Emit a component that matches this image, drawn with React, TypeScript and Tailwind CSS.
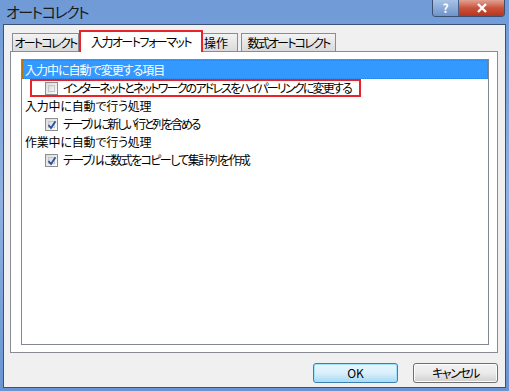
import React from "react";

const jp = "font-['Noto_Sans_CJK_JP','Noto_Sans',sans-serif] [font-feature-settings:'palt'] whitespace-nowrap";

function Check({ checked }: { checked?: boolean }) {
  return (
    <div className="relative w-[13px] h-[13px] border border-[#8e8f8f] bg-gradient-to-br from-[#dcdcdc] to-[#fbfbfb] shrink-0">
      <div className="absolute inset-[2px] border border-[#c6c6c6] bg-gradient-to-br from-[#d8d8d8] to-[#f7f7f7]" />
      {checked && (
        <svg className="absolute left-[1px] top-[1px]" width="10" height="10" viewBox="0 0 10 10">
          <path d="M1.5 5 L4 8 L8.5 1.2" fill="none" stroke="#2a4ea8" strokeWidth="1.8" />
        </svg>
      )}
    </div>
  );
}

export default function App() {
  return (
    <div className={`w-[509px] h-[391px] bg-gradient-to-b from-[#6f9ad6] via-[#8fb2e2] to-[#6a95d2] flex flex-col ${jp} text-[12px] text-black leading-none`}>
      {/* title bar */}
      <div className="h-[24px] flex items-start relative">
        <div className="pl-[6px] pt-[4px] text-[15px] text-[#1a1a1a] tracking-[-1.5px]">オートコレクト</div>
        <div className="ml-auto mr-[4px] flex h-[17px] rounded-b-[4px] border border-t-0 border-[#3a4f73] overflow-hidden">
          <div className="w-[26px] h-full bg-gradient-to-b from-[#a8c2e6] to-[#6f93c9] flex items-center justify-center text-white text-[12px] font-bold border-r border-[#4a5f86]">?</div>
          <div className="w-[45px] h-full bg-gradient-to-b from-[#e0a193] via-[#c9523b] to-[#b7341f] flex items-center justify-center">
            <svg width="12" height="10" viewBox="0 0 12 10">
              <path d="M2 1 L10 9 M10 1 L2 9" stroke="#fff" strokeWidth="2.4" />
            </svg>
          </div>
        </div>
      </div>
      {/* client */}
      <div className="flex-1 mx-[3px] mb-[3px] bg-[#f0f0f0] border border-[#3d5176] flex flex-col">
        <div className="pl-[6px] pr-[7px] pt-[5px]">
          {/* tabs */}
          <div className="flex items-end h-[21px] pl-[2px] relative z-10">
            <div className="h-[18px] w-[67px] border border-b-0 border-[#898c95] bg-gradient-to-b from-[#f3f3f3] to-[#dadada] flex items-center justify-center tracking-[-1.7px]">オートコレクト</div>
            <div className="h-[22px] w-[124px] -mb-[1px] border-2 border-b-0 border-[#e8242a] bg-white flex items-center justify-center pb-[1px] tracking-[-1.5px]">
              入力オートフォーマット
            </div>
            <div className="h-[18px] w-[35px] border border-b-0 border-l-0 border-[#898c95] bg-gradient-to-b from-[#f3f3f3] to-[#dadada] flex items-center pl-[1px]">操作</div>
            <div className="h-[18px] w-[95px] ml-[3px] border border-b-0 border-[#898c95] bg-gradient-to-b from-[#f3f3f3] to-[#dadada] flex items-center justify-center tracking-[-1.8px]">数式オートコレクト</div>
          </div>
          {/* panel */}
          <div className="h-[302px] border border-[#898c95] bg-white pt-[7px] pl-[10px] pr-[8px] pb-[7px] relative">
            <div className="h-full border border-[#828790] bg-white">
              <div className="h-[19px] bg-[#3399ff] text-white pl-[2px] flex items-center border border-dotted border-[#b06a00] tracking-[-1px]">
                入力中に自動で変更する項目
              </div>
              <div className="h-[18px] ml-[8px] w-[331px] border-2 border-[#e8242a] flex items-center pl-[13px]">
                <Check />
                <span className="ml-[5px] tracking-[-1.8px]">インターネットとネットワークのアドレスをハイパーリンクに変更する</span>
              </div>
              <div className="h-[18px] flex items-center pl-[3px] tracking-[-0.2px]">入力中に自動で行う処理</div>
              <div className="h-[18px] flex items-center pl-[23px]">
                <Check checked />
                <span className="ml-[5px] tracking-[-2.2px]">テーブルに新しい行と列を含める</span>
              </div>
              <div className="h-[18px] flex items-center pl-[3px] tracking-[-0.2px]">作業中に自動で行う処理</div>
              <div className="h-[18px] flex items-center pl-[23px]">
                <Check checked />
                <span className="ml-[5px] tracking-[-1.6px]">テーブルに数式をコピーして集計列を作成</span>
              </div>
            </div>
          </div>
        </div>
        {/* buttons */}
        <div className="flex justify-end gap-[15px] pr-[7px] mt-[10px]">
          <div className="w-[85px] h-[20px] rounded-[3px] border border-[#3c7fb1] bg-gradient-to-b from-[#eaf6fd] via-[#d9f0fc] to-[#a7d9f5] flex items-center justify-center shadow-[inset_0_0_0_1px_#9fe4fb]">OK</div>
          <div className="w-[85px] h-[20px] rounded-[3px] border border-[#707070] bg-gradient-to-b from-[#f2f2f2] via-[#ebebeb] to-[#cfcfcf] flex items-center justify-center shadow-[inset_0_0_0_1px_#fcfcfc] tracking-[-1.5px]">キャンセル</div>
        </div>
      </div>
    </div>
  );
}
